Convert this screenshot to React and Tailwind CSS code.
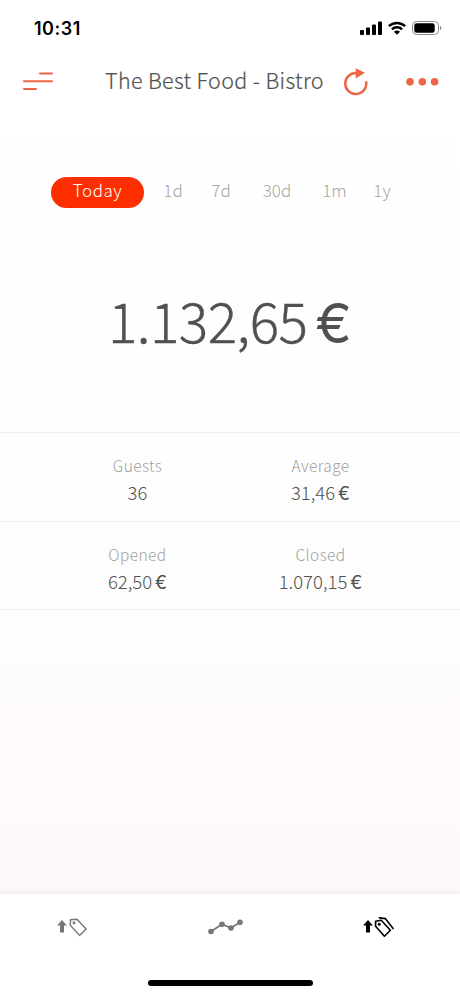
const ranges = [
  { label: '1d', className: 'ml-5 w-[18px]' },
  { label: '7d', className: 'ml-[29px] w-5' },
  { label: '30d', className: 'ml-[30px] w-8' },
  { label: '1m', className: 'ml-[30px] w-[23px]' },
  { label: '1y', className: 'ml-[27px] w-[18px]' },
]

const stats = [
  [
    { label: 'Guests', value: '36' },
    { label: 'Average', value: '31,46', currency: true },
  ],
  [
    { label: 'Opened', value: '62,50', currency: true },
    { label: 'Closed', value: '1.070,15', currency: true },
  ],
]

export default function App() {
  return (
    <div className="flex h-[996px] w-[460px] flex-col overflow-hidden bg-linear-to-b from-white from-10% via-[#fefdfd] via-60% to-[#fff5f5] font-['Noto_Sans_CJK_SC',sans-serif] font-light text-[#4f5150]">
      <StatusBar />
      <Header />

      {/* Range picker */}
      <nav className="mt-[69px] flex h-[31px] items-center pl-[51px] text-[17px] whitespace-nowrap text-[#a5a5a5]">
        <button className="flex h-[31px] w-[93px] items-center justify-center rounded-full bg-[#fd2f00] pb-1.5 tracking-[0.5px] text-white">
          Today
        </button>
        {ranges.map((range) => (
          <button key={range.label} className={`flex justify-center pb-1.5 ${range.className}`}>
            {range.label}
          </button>
        ))}
      </nav>

      {/* Total */}
      <div className="flex h-56 items-baseline justify-center gap-2 pt-[84px] text-[55px] leading-none whitespace-nowrap">
        <span className="tracking-[-0.6px] [-webkit-text-stroke:0.4px_#4f5150]">1.132,65</span>
        <span className="font-['Inter',sans-serif] font-normal">€</span>
      </div>

      {stats.map((row, i) => (
        <StatRow key={i} items={row} />
      ))}
      <div className="-mt-px border-t border-[#efeeee]" />

      <TabBar />
    </div>
  )
}

function StatusBar() {
  return (
    <div className="flex h-14 shrink-0 items-center justify-between pr-[18px] pl-[34px] text-black">
      <span className="font-['Inter',sans-serif] text-[18px] font-semibold tracking-[0.5px]">10:31</span>
      <div className="flex items-center gap-[6px]">
        <svg width="22" height="14" viewBox="0 0 22 14" fill="currentColor">
          <rect x="0" y="9" width="4" height="5" rx="1" />
          <rect x="6" y="6.5" width="4" height="7.5" rx="1" />
          <rect x="12" y="3.5" width="4" height="10.5" rx="1" />
          <rect x="18" y="0.5" width="4" height="13.5" rx="1" />
        </svg>
        <svg width="18" height="14" viewBox="0 0 18 14" fill="none" stroke="currentColor" strokeWidth="2.5">
          <path d="M.9 5.2a11.7 11.7 0 0 1 16.2 0" />
          <path d="M3.9 8.4a7.3 7.3 0 0 1 10.2 0" />
          <path d="M9 13.7 6 10.8a4.2 4.2 0 0 1 6 0Z" fill="currentColor" stroke="none" />
        </svg>
        <svg width="30" height="14" viewBox="0 0 30 14" fill="none">
          <rect x=".5" y=".5" width="26" height="13" rx="4" stroke="#8b8b8b" />
          <rect x="2.3" y="2.3" width="20.4" height="9.4" rx="2.3" fill="currentColor" />
          <path d="M28 4.8c1.8.7 1.8 3.7 0 4.4Z" fill="#8b8b8b" />
        </svg>
      </div>
    </div>
  )
}

function Header() {
  return (
    <header className="flex h-[52px] shrink-0 items-center pl-[23px] text-[#ed6547]">
      <svg width="30" height="20" viewBox="0 0 30 20" fill="none" stroke="currentColor" strokeWidth="2" strokeLinecap="round">
        <path d="M17 1.5h12M1 9.3h28M1 17h12" />
      </svg>
      <h1 className="ml-[52px] w-[219px] pb-1 text-[21.5px] tracking-[0.35px] whitespace-nowrap text-[#4f5150] [-webkit-text-stroke:0.2px_#4f5150]">
        The Best Food - Bistro
      </h1>
      <svg className="ml-5" width="24" height="28" viewBox="0 0 24 28" fill="none">
        <path d="M22.2 14.3A10.5 10.5 0 1 1 12 5.1" stroke="currentColor" strokeWidth="2.5" strokeLinecap="round" />
        <path d="m11.7.2 9.3 4.6-9.3 5.8Z" fill="currentColor" />
      </svg>
      <svg className="ml-[38px]" width="33" height="8" viewBox="0 0 33 8" fill="currentColor">
        <circle cx="4" cy="3.8" r="3.8" />
        <circle cx="16.3" cy="3.8" r="3.8" />
        <circle cx="28.6" cy="3.8" r="3.8" />
      </svg>
    </header>
  )
}

function StatRow({ items }) {
  return (
    <div className="grid h-[89px] shrink-0 grid-cols-[183px_183px] border-t border-[#efeeee] pt-[19px] pl-[46px] text-center">
      {items.map((item) => (
        <div key={item.label} className="whitespace-nowrap">
          <div className="text-[15.5px] leading-[27px] tracking-[0.4px] text-[#a0a0a0]">{item.label}</div>
          <div className="flex items-baseline justify-center gap-[3px] text-[18.5px] leading-[27px]">
            {item.value}
            {item.currency && <span className="font-['Inter',sans-serif] text-[18px] font-normal">€</span>}
          </div>
        </div>
      ))}
    </div>
  )
}

function TabBar() {
  return (
    <footer className="mt-auto flex h-[102px] shrink-0 flex-col items-center bg-white shadow-[0_-2px_6px_rgba(0,0,0,0.05)]">
      <div className="flex h-[66px] w-full items-center justify-between pr-[66px] pl-[57px]">
        <svg width="31" height="20" viewBox="0 0 31 20" fill="none" className="text-[#777]">
          <UpArrow />
          <path d="M13.5 2.8 20 2.2l9.1 9.7-6.6 6.5-9.2-10.1Z" stroke="currentColor" strokeWidth="1.4" strokeLinejoin="round" />
          <circle cx="17" cy="6" r="1.4" fill="currentColor" />
        </svg>
        <svg width="35" height="16" viewBox="0 0 35 16" fill="currentColor" className="text-[#777]">
          <path d="m3 12.5 11-7.3 9 3.8 9-5.7" fill="none" stroke="currentColor" strokeWidth="1.7" />
          <circle cx="3" cy="12.5" r="2.8" />
          <circle cx="14" cy="5.2" r="2.8" />
          <circle cx="23" cy="9" r="2.8" />
          <circle cx="32" cy="3.3" r="2.8" />
        </svg>
        <svg width="31" height="20" viewBox="0 0 31 20" fill="none" className="text-black">
          <UpArrow />
          <path d="m12.6 4.3 5.6-1 9.2 10-6 5.9-8.8-10Z" stroke="currentColor" strokeWidth="1.6" strokeLinejoin="round" />
          <circle cx="16.3" cy="7.2" r="1.5" fill="currentColor" />
          <path d="m16.5.9 5.8.7 7.8 9.9" stroke="currentColor" strokeWidth="1.6" strokeLinecap="round" />
        </svg>
      </div>
      <div className="mt-5 h-1.5 w-[165px] rounded-full bg-black" />
    </footer>
  )
}

function UpArrow() {
  return <path d="M5 3 9.9 8.6H7v6.9H3V8.6H.1Z" fill="currentColor" />
}
